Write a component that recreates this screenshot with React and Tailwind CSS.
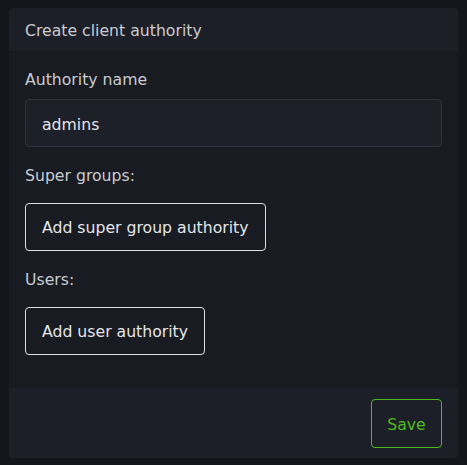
import React, { useState } from "react";

export default function App() {
  const [name, setName] = useState("admins");

  return (
    <div
      className="min-h-[465px] bg-[#13161c] pt-2 pl-[9px] pr-[9px] pb-[7px] text-[15.7px]"
      style={{ fontFamily: '"DejaVu Sans", sans-serif' }}
    >
      <div className="w-[449px] h-[450px] rounded-[4px] bg-[#181b22] flex flex-col overflow-hidden">
        <div className="h-[43px] bg-[#1c1f27] px-4 pt-[3px] flex items-center text-[#c9cbd1]">
          Create client authority
        </div>

        <div className="flex-1 px-4 pt-[17px] flex flex-col items-start">
          <label className="leading-6 text-[#c9cbd1]">Authority name</label>
          <input
            value={name}
            onChange={(e) => setName(e.target.value)}
            className="mt-[7px] w-full h-12 rounded-[4px] bg-[#1d2029] border border-[#2e323c] px-4 pt-[2px] text-[#e4e5e8] outline-none"
          />

          <div className="mt-[17px] leading-6 text-[#c9cbd1]">Super groups:</div>
          <button className="mt-[15px] h-12 px-4 pt-[2px] rounded-[4px] border border-[#dcdde0] text-[#e4e5e8]">
            Add super group authority
          </button>

          <div className="mt-[17px] leading-6 text-[#c9cbd1]">Users:</div>
          <button className="mt-[15px] h-12 px-4 pt-[2px] rounded-[4px] border border-[#dcdde0] text-[#e4e5e8]">
            Add user authority
          </button>
        </div>

        <div className="h-[70px] bg-[#1c1f27] px-4 pt-[11px] flex justify-end items-start">
          <button className="h-[49px] w-[71px] pt-[2px] rounded-[4px] border border-[#4fba1d] text-[#4fba1d]">
            Save
          </button>
        </div>
      </div>
    </div>
  );
}
